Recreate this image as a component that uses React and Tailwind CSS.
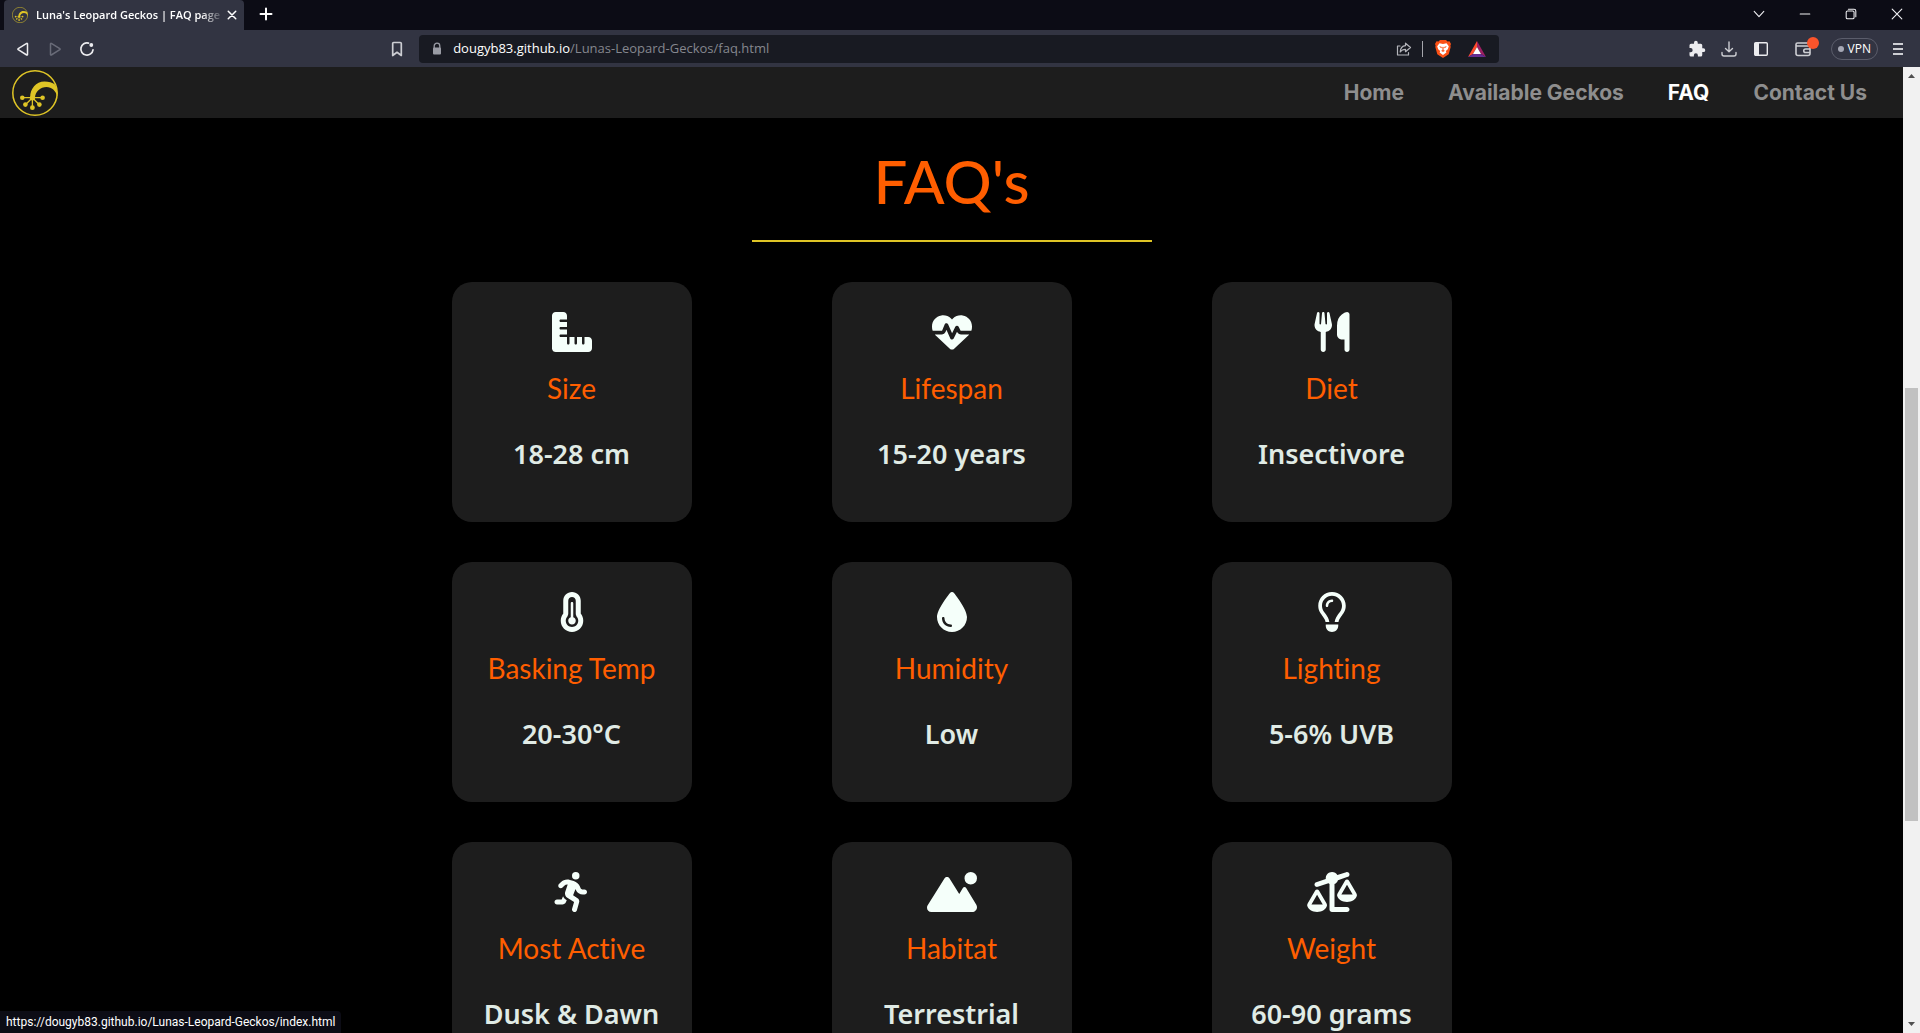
import React from "react";
import {
  FaRulerCombined,
  FaHeartPulse,
  FaUtensils,
  FaTemperatureThreeQuarters,
  FaDroplet,
  FaRegLightbulb,
  FaPersonRunning,
  FaMountainSun,
  FaScaleUnbalanced,
} from "react-icons/fa6";

const facts = [
  { Icon: FaRulerCombined, title: "Size", value: "18-28 cm" },
  { Icon: FaHeartPulse, title: "Lifespan", value: "15-20 years" },
  { Icon: FaUtensils, title: "Diet", value: "Insectivore" },
  { Icon: FaTemperatureThreeQuarters, title: "Basking Temp", value: "20-30°C" },
  { Icon: FaDroplet, title: "Humidity", value: "Low" },
  { Icon: FaRegLightbulb, title: "Lighting", value: "5-6% UVB" },
  { Icon: FaPersonRunning, title: "Most Active", value: "Dusk & Dawn" },
  { Icon: FaMountainSun, title: "Habitat", value: "Terrestrial" },
  { Icon: FaScaleUnbalanced, title: "Weight", value: "60-90 grams" },
];

const links = [
  { label: "Home", href: "#home" },
  { label: "Available Geckos", href: "#geckos" },
  { label: "FAQ", href: "#faq", active: true },
  { label: "Contact Us", href: "#contact" },
];

function GeckoLogo({ className }) {
  return (
    <svg viewBox="0 0 46 46" className={className} fill="#dfc526" aria-hidden="true">
      <circle cx="23" cy="23" r="22.2" fill="none" stroke="#dfc526" strokeWidth="1.5" />
      <path d="M18.2 27.5C18 19 24 11.6 32.5 11.6c4.3 0 7.8 1.2 10.6 3 1.6 3 2.5 7.5 2.3 12C43.6 20.5 39.8 17 34.5 17c-6 0-11 4.4-11.6 10.7l-.6 2.3h-3.4z" />
      <g stroke="#dfc526" strokeWidth="1.3">
        <path d="M10.3 27.7h20.4M20.4 27.7l-7 7M20.4 27.7l7 7M20.4 27.7v10" />
      </g>
      <circle cx="20.4" cy="28" r="2.5" />
      <circle cx="10.3" cy="27.7" r="2.3" />
      <circle cx="30.6" cy="27.7" r="2.3" />
      <circle cx="13.4" cy="34.6" r="2.3" />
      <circle cx="27.4" cy="34.6" r="2.3" />
      <circle cx="20.4" cy="37.7" r="2.4" />
    </svg>
  );
}

function Line({ children, className, width = 1.5, box = "0 0 16 16" }) {
  return (
    <svg
      viewBox={box}
      className={className}
      fill="none"
      stroke="currentColor"
      strokeWidth={width}
      strokeLinecap="round"
      strokeLinejoin="round"
      aria-hidden="true"
    >
      {children}
    </svg>
  );
}

function IconButton({ label, className = "", children }) {
  return (
    <button type="button" aria-label={label} className={`flex h-7 shrink-0 items-center justify-center ${className}`}>
      {children}
    </button>
  );
}

function TabStrip() {
  return (
    <div className="flex h-[30px] items-stretch bg-[#0c0c15] pl-1">
      <div className="flex w-60 items-center rounded-t bg-[#323442] pl-2 pr-1">
        <GeckoLogo className="mr-2 size-4 shrink-0" />
        <span className="flex-1 whitespace-nowrap text-[11px] font-semibold text-white [mask-image:linear-gradient(to_right,black_88%,transparent)]">
          Luna's Leopard Geckos | FAQ page
        </span>
        <IconButton label="Close tab" className="w-4 text-white">
          <Line className="size-3" width={2}><path d="M3 3l10 10M13 3L3 13" /></Line>
        </IconButton>
      </div>
      <IconButton label="New tab" className="w-11 text-white">
        <Line className="size-4" width={2}><path d="M8 2.500v11M2.500 8h11" /></Line>
      </IconButton>
      <div className="ml-auto flex text-[#f1f1f4]">
        <IconButton label="Search tabs" className="w-[46px]">
          <Line className="size-3.5" width={1.2}><path d="M2.500 5l5.500 6 5.500-6" /></Line>
        </IconButton>
        <IconButton label="Minimize" className="w-[46px]">
          <Line className="size-3.5" width={1.2}><path d="M2.500 8h11" /></Line>
        </IconButton>
        <IconButton label="Restore" className="w-[46px]">
          <Line className="size-3.5" width={1.2}>
            <rect x="2.5" y="4.5" width="9" height="9" rx="1.5" />
            <path d="M5 2.500h6.500a2 2 0 0 1 2 2V11" />
          </Line>
        </IconButton>
        <IconButton label="Close window" className="w-[46px]">
          <Line className="size-3.5" width={1.3}><path d="M2.500 2.500l11 11M13.500 2.500l-11 11" /></Line>
        </IconButton>
      </div>
    </div>
  );
}

function Toolbar() {
  return (
    <div className="flex h-[37px] items-center bg-[#323442] pl-[7px] text-[#ececef]">
      <IconButton label="Back" className="w-8">
        <Line className="size-4"><path d="M12.500 2.800v10.800a.5.500 0 0 1-.8.400L3.200 8.700a.6.600 0 0 1 0-1L11.700 2.400a.5.500 0 0 1 .8.400z" /></Line>
      </IconButton>
      <IconButton label="Forward" className="w-8 text-[#696b78]">
        <Line className="size-4"><path d="M3.500 2.800v10.800a.5.500 0 0 0 .8.400l8.500-5.300a.6.600 0 0 0 0-1L4.300 2.400a.5.500 0 0 0-.8.400z" /></Line>
      </IconButton>
      <IconButton label="Reload" className="w-8">
        <Line className="size-4" width={1.7}>
          <path d="M9.500 2.100A6.100 6.100 0 1 0 14 8.800" />
          <circle cx="12.3" cy="4" r="1.9" fill="currentColor" stroke="none" />
        </Line>
      </IconButton>
      <div className="grow-[3]" />
      <IconButton label="Bookmark this tab" className="w-11 text-[#cdced3]">
        <Line className="size-4" width={1.7}><path d="M3.700 2.500a1 1 0 0 1 1-1h6.600a1 1 0 0 1 1 1v12L8 11.300l-4.300 3.200z" /></Line>
      </IconButton>
      <div className="flex h-7 w-[1080px] min-w-0 items-center rounded bg-[#181a22] pl-3 pr-1 text-[13px]">
        <svg viewBox="0 0 12 16" className="h-4 w-3 shrink-0" aria-hidden="true">
          <path d="M3.200 8V5a2.800 2.800 0 0 1 5.600 0v3" fill="none" stroke="#9a9ca5" strokeWidth="1.3" />
          <rect x="2" y="6.500" width="8" height="7" rx="1" fill="#9a9ca5" />
        </svg>
        <label htmlFor="address" className="ml-2.5 text-white">dougyb83.github.io</label>
        <input
          id="address"
          type="text"
          defaultValue="/Lunas-Leopard-Geckos/faq.html"
          className="min-w-0 flex-1 bg-transparent text-[#85878e] outline-none"
        />
        <IconButton label="Share" className="w-8 text-[#b4b5bb]">
          <Line className="size-4" width={1.2}>
            <path d="M4 5H1.500v9h11v-2.500" />
            <path d="M9.500 2.200l5 4.300-5 4.200V8.300c-2.500 0-4 .8-5.300 2.700.2-3.600 2-6 5.300-6.300z" />
          </Line>
        </IconButton>
        <span className="mx-0.5 h-4 w-px bg-[#a5a6ac]" />
        <IconButton label="Brave Shields" className="ml-0.5 w-8">
          <svg viewBox="0 0 16 18" className="h-[18px] w-4" aria-hidden="true">
            <path d="M5 0h6l1.500 1.500L14.500 1.300 16 4l-.6 1.500.3 1.500-2 7.300L8 18l-5.700-3.700L.3 7l.3-1.500L0 4l1.500-2.700 2 .2z" fill="#fb5015" />
            <path d="M4.500 3.300L8 4l3.500-.7 2.300 2.900-1 3-2 1.800.6 1.500L8 15l-3.400-2.500.6-1.500-2-1.800-1-3z" fill="#fff" />
            <path d="M4.600 6.600l2 .5-.3.900zM11.400 6.600l-2 .5.300.900zM7.600 7h.8l-.2 3 1.300.8L8 11.700l-1.500-.9 1.300-.8z" fill="#fb5015" stroke="#fb5015" strokeWidth=".4" />
          </svg>
        </IconButton>
        <IconButton label="Brave Rewards" className="w-9">
          <svg viewBox="0 0 18 16" className="h-4 w-[18px]" aria-hidden="true">
            <path d="M9 0L0 16l5-3L9 6z" fill="#ff4a2b" />
            <path d="M9 0l9 16-5-3L9 6z" fill="#9e1f63" />
            <path d="M0 16h18l-5-3H5z" fill="#662d91" />
            <path d="M9 6l4 7H5z" fill="#fff" />
          </svg>
        </IconButton>
      </div>
      <div className="grow-[2]" />
      <div className="flex items-center pr-1.5">
        <IconButton label="Extensions" className="w-8">
          <svg viewBox="0 0 24 24" className="size-[18px]" fill="currentColor" aria-hidden="true">
            <path d="M20.500 11H19V7a2 2 0 0 0-2-2h-4V3.500a2.500 2.500 0 0 0-5 0V5H4a2 2 0 0 0-2 2v3.800h1.500a2.700 2.700 0 0 1 0 5.400H2V20a2 2 0 0 0 2 2h3.800v-1.500a2.700 2.700 0 0 1 5.400 0V22H17a2 2 0 0 0 2-2v-4h1.500a2.500 2.500 0 0 0 0-5z" />
          </svg>
        </IconButton>
        <IconButton label="Downloads" className="w-8 text-[#cdced3]">
          <Line className="size-4" width={1.4}>
            <path d="M8 1v9.500M4.500 7.500L8 10.700l3.500-3.200M1 11.500V13a2 2 0 0 0 2 2h10a2 2 0 0 0 2-2v-1.500" />
          </Line>
        </IconButton>
        <IconButton label="Sidebar" className="w-8">
          <svg viewBox="0 0 16 16" className="size-4" aria-hidden="true">
            <rect x="1.700" y="1.700" width="12.600" height="12.600" rx="1" fill="none" stroke="currentColor" strokeWidth="1.4" />
            <path d="M2 2h4v12H2z" fill="currentColor" />
          </svg>
        </IconButton>
        <IconButton label="Wallet" className="relative ml-1 w-11 text-[#cdced3]">
          <Line className="size-4" width={1.6}>
            <path d="M14.500 5V3.500a1.500 1.500 0 0 0-1.500-1.500H2.500A1.500 1.500 0 0 0 1 3.500v9A2 2 0 0 0 3 14.500h10a2 2 0 0 0 2-2V7a2 2 0 0 0-2-2H2" />
            <path d="M14.500 8h-4a1.700 1.700 0 0 0 0 3.500h4" />
          </Line>
          <span className="absolute right-1.5 top-0.5 size-3 rounded-full bg-[#fb542b]" />
        </IconButton>
        <button type="button" className="ml-1.5 flex h-[22px] items-center gap-1 rounded-full border border-[#5b5d6b] px-1.5 text-xs text-white">
          <span className="size-1.5 rounded-full bg-[#a6a8b5]" />
          VPN
        </button>
        <IconButton label="Menu" className="ml-1 w-8 text-[#cdced3]">
          <svg viewBox="0 0 10 12" className="h-3 w-2.5" fill="currentColor" aria-hidden="true">
            <path d="M0 0h10v2H0zM0 5h10v2H0zM0 10h10v2H0z" />
          </svg>
        </IconButton>
      </div>
    </div>
  );
}

function SiteHeader() {
  return (
    <header className="flex h-[51px] items-center justify-between bg-[#1d1d1d] pl-3 pr-9">
      <a href="#home" aria-label="Luna's Leopard Geckos">
        <GeckoLogo className="size-[46px]" />
      </a>
      <nav className="flex gap-11 font-[Inter,sans-serif] text-[21px] font-bold">
        {links.map(({ label, href, active }) => (
          <a key={label} href={href} className={active ? "text-white" : "text-[#8e8e8e]"}>
            {label}
          </a>
        ))}
      </nav>
    </header>
  );
}

function FactCard({ Icon, title, value }) {
  return (
    <article className="flex h-60 w-60 flex-col items-center rounded-[20px] bg-[#1d1d1d] pt-[30px]">
      <Icon className="h-10 w-[50px] text-[#f5fffa]" aria-hidden="true" />
      <h2 className="mt-4 font-[Lato,sans-serif] text-[28px] leading-10 text-[#ff5e00] [font-variant-ligatures:none]">{title}</h2>
      <p className="mt-[26px] font-['Noto_Sans',sans-serif] text-[27px] font-semibold leading-10 text-[#e0ebe5]">{value}</p>
    </article>
  );
}

function Scrollbar() {
  return (
    <div className="flex w-[17px] shrink-0 flex-col items-center bg-[#f1f1f1]" aria-hidden="true">
      <svg viewBox="0 0 17 17" className="size-[17px]"><path d="M5 11l3.500-4 3.500 4z" fill="#505050" /></svg>
      <div className="grow-[304]" />
      <div className="w-[13px] grow-[433] bg-[#c1c1c1]" />
      <div className="grow-[195]" />
      <svg viewBox="0 0 17 17" className="size-[17px]"><path d="M5 6l3.500 4L12 6z" fill="#505050" /></svg>
    </div>
  );
}

export default function App() {
  return (
    <div className="relative flex h-screen flex-col overflow-hidden bg-black font-['Open_Sans',sans-serif]">
      <TabStrip />
      <Toolbar />
      <div className="flex min-h-0 flex-1">
        <div className="min-w-0 flex-1 overflow-hidden">
          <SiteHeader />
          <main className="flex flex-col items-center bg-black">
            <h1 className="w-[400px] border-b-2 border-[#dfc526] pb-6 pt-7 text-center font-[Lato,sans-serif] text-[60px] font-medium leading-[70px] text-[#ff5e00]">
              FAQ's
            </h1>
            <section className="mt-10 grid w-full max-w-[1000px] grid-cols-[repeat(3,auto)] justify-between gap-y-10">
              {facts.map((fact) => (
                <FactCard key={fact.title} {...fact} />
              ))}
            </section>
          </main>
        </div>
        <Scrollbar />
      </div>
      <div className="absolute bottom-0 left-0 flex h-[22px] items-center rounded-tr bg-[#0c0c15] px-1.5 font-[Roboto,sans-serif] text-xs text-white">
        https://dougyb83.github.io/Lunas-Leopard-Geckos/index.html
      </div>
    </div>
  );
}
